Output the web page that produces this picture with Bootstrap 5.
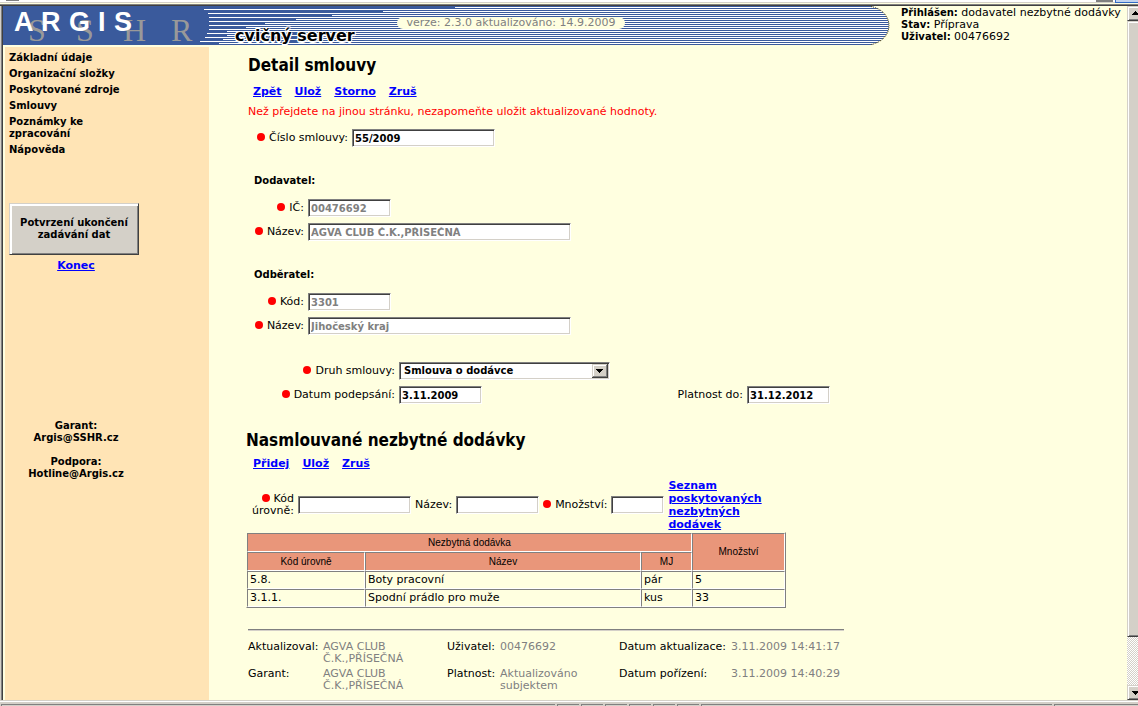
<!DOCTYPE html>
<html lang="cs">
<head>
<meta charset="utf-8">
<meta name="viewport" content="width=device-width, initial-scale=1">
<title>ARGIS – Detail smlouvy</title>
<link href="https://cdn.jsdelivr.net/npm/bootstrap@5.3.0/dist/css/bootstrap.min.css" rel="stylesheet">
<style>
  :root { --face: #d4d0c8; --page: #ffffe0; --side: #ffe4b5; }
  body { font: 11px/12px "DejaVu Sans", Verdana, sans-serif; color: #000; background: var(--page); }
  a { color: #00f; }
  b, .strong { font-weight: 700; font-size: 10px; }
  h1, h2 { font: 700 17px/20px "DejaVu Sans Condensed", Tahoma, sans-serif; margin: 0; }

  .chrome-top { height: 6px; background: #fff; border-bottom: 1px solid #404040; box-shadow: inset 0 -1px #808080, inset 0 -2px var(--page), inset 0 -3px var(--face); padding-left: 6px; gap: 2px; }
  .chrome-top i { width: 13px; height: 1px; background: #808080; }
  .chrome-top i + i { width: 17px; height: 2px; }
  .chrome-top .tool-hot { width: 23px; height: 3px; background: #c1d2ee; border: solid #316ac5; border-width: 0 0 1px 1px; }
  .chrome-side { width: 3px; background: var(--face); border-right: 1px solid #404040; box-shadow: inset -1px 0 #808080; }
  .status-strip { height: 6px; background: var(--face); border-top: 1px solid var(--face); box-shadow: inset 0 1px #fff; padding: 3px 0 0 1px; gap: 2px; }
  .status-strip i { width: 22px; border: solid #808080; border-width: 1px 0 0 1px; }
  .status-strip .zone { width: 351px; }
  .status-strip .zoom-level { width: 84px; }

  .scroller { width: 11px; background: repeating-conic-gradient(#fff 0 25%, var(--face) 0 50%) 0 0/2px 2px; }
  .scroller span { background: var(--face); border: solid; border-width: 1px 0 1px 1px; border-color: var(--face) #404040 #404040 var(--face); box-shadow: inset 1px 1px #fff, inset 0 -1px #808080; }
  .scroller .thumb { height: 616px; }
  .scroller svg { display: block; width: 10px; height: 13px; }

  .banner { width: 889px; }
  .banner svg { display: block; overflow: visible; }
  .version-pill { left: 394px; top: 11px; width: 228px; height: 12px; line-height: 12px; border-radius: 6px; background: var(--page); color: #808080; }
  .server-name { left: 232px; top: 22px; font-size: 16px; line-height: 16px; text-shadow: 1px 1px #fff, -1px -1px #fff, 1px -1px #fff, -1px 1px #fff, 0 2px #fff; }
  .user-info { padding: 1px 0 0 9px; }

  .page-body { padding: 2px 0 0 2px; }
  .sidebar { width: 204px; background: var(--side); font-size: 10px; font-weight: 700; padding: 5px 4px; }
  .sidebar li { width: 120px; }
  .sidebar li a { color: #000; text-decoration: none; }
  .sidebar .lower { width: 134px; margin-top: 47px; }
  .sidebar .contacts { margin-top: 148px; }
  .confirm-btn { width: 130px; height: 52px; font: inherit; color: #000; background: var(--face); border: 1px solid; border-color: var(--face) #404040 #404040 var(--face); box-shadow: inset 1px 1px #fff, inset 2px 2px #fff, inset -1px -1px #808080; }
  .big-link, .tools a { font-size: 11px; line-height: 13px; font-weight: 700; }

  .content { padding: 8px 0 0 37px; }
  .inset { padding-left: 2px; }
  .tools { gap: 13px; padding-left: 5px; margin-top: 10px; }
  .items .tools { padding-left: 7px; margin-top: 7px; }
  .warn { color: #f00; }
  .field-row { height: 24px; gap: 4px; }
  .field-row label, .filter label { text-align: right; }
  .group-title { margin: 25px 0 9px; padding-left: 6px; }
  .terms { margin-top: 21px; }
  .dot::before { content: ""; display: inline-block; width: 8px; height: 8px; border-radius: 50%; background: #f00; margin-right: 4px; }
  .lab-a { width: 100px; } .lab-b { width: 56px; } .lab-c { width: 147px; }
  .lab-d { width: 257px; }
  .sunken { height: 18px; padding: 1px 2px; font: 700 10px/14px "DejaVu Sans", Verdana, sans-serif; color: #000; background-color: #fff; border: 1px solid; border-color: #808080 #fff #fff #808080; border-radius: 0; box-shadow: inset 1px 1px #404040, inset -1px -1px var(--face); }
  .sunken:disabled { color: #808080; opacity: 1; }
  select.sunken { appearance: none; padding-left: 4px; background: #fff url("data:image/svg+xml,%3Csvg xmlns='http://www.w3.org/2000/svg' width='16' height='14' shape-rendering='crispEdges'%3E%3Cpath fill='%23404040' d='M0 0h16v14H0z'/%3E%3Cpath fill='%23d4d0c8' d='M0 0h15v13H0z'/%3E%3Cpath fill='%23808080' d='M1 1h14v12H1z'/%3E%3Cpath fill='%23fff' d='M1 1h13v11H1z'/%3E%3Cpath fill='%23d4d0c8' d='M2 2h12v10H2z'/%3E%3Cpath d='M4 5h7v1H4zM5 6h5v1H5zM6 7h3v1H6zM7 8h1v1H7z'/%3E%3C/svg%3E") right 1px top 1px no-repeat; }
  .w-s { width: 83px; } .w-m { width: 143px; } .w-l { width: 263px; } .w-sel { width: 211px; } .w-code { width: 113px; } .w-qty { width: 53px; }

  .items { margin-top: 23px; }
  .filter { gap: 4px; margin: 9px 0 1px; }
  .filter .two-line { width: 48px; }

  .grid-data { width: 540px; border: 1px solid; border-color: var(--page) #808080 #808080 var(--page); border-collapse: separate; border-spacing: 0; table-layout: fixed; }
  .grid-data th, .grid-data td { border: 1px solid; border-color: #808080 #fff #fff #808080; }
  .grid-data th { height: 19px; padding: 0; text-align: center; font: 400 10px/12px "Liberation Sans", Arial, sans-serif; background: #e9967a; }
  .grid-data td { height: 18px; padding: 0 2px; }
  .col-code { width: 118px; } .col-name { width: 276px; } .col-unit { width: 51px; }

  .rule { width: 596px; height: 2px; background: #808080; border-bottom: 1px solid var(--face); margin: 21px 0 10px; }
  .meta { width: 597px; display: grid; grid-template-columns: 75px 124px 53px 119px 112px 114px; row-gap: 3px; margin: 0; }
  .meta dt { font-weight: 400; } .meta dd { margin: 0; color: #808080; }
</style>
</head>
<body>
<div class="d-flex flex-column min-vh-100">
  <div class="chrome-top d-flex"><i class="me-auto"></i><i></i><i class="tool-hot"></i></div>
  <div class="d-flex flex-grow-1">
    <div class="chrome-side flex-shrink-0"></div>
    <div class="flex-grow-1 d-flex flex-column">
      <header class="d-flex">
        <div class="banner position-relative flex-shrink-0">
          <svg width="887" height="39" role="img" aria-label="ARGIS SSHR">
            <defs>
              <pattern id="stripes" width="4" height="2" patternUnits="userSpaceOnUse"><path fill="#fff" d="M0 0h4v2H0z"/><path fill="#3a5a9c" d="M0 0h4v1H0z"/></pattern>
            </defs>
            <path fill="url(#stripes)" d="M200 0H868C880 3 886 11 886 19.500S880 36 868 39H200Z"/>
            <path fill="none" stroke="#5c4c10" stroke-dasharray="1 1" d="M868 .5C880 3 886 11 886 19.500S880 36 868 38.500"/>
            <path fill="#3a5a9c" d="M0 0H452V2H380V6H329V10H293V14H262V18H243V22H224V27H300V39H0Z"/>
            <g fill="#fff" shape-rendering="crispEdges">
              <path d="M201 3h251v1H201zM205 7h175v1H205zM206 11h123v1H206zM206 15h87v1H206zM206 19h56v1H206zM206 23h40v1H206zM204 27h40v1H204zM202 31h40v1H202zM197 35h60v1H197z"/>
              <path d="M329 9h60v1h-60zM293 13h60v1h-60zM262 17h60v1h-60zM243 21h60v1h-60zM230 25h70v1h-70zM224 29h76v1h-76zM220 33h80v1h-80zM216 37h84v1h-84z"/>
            </g>
            <g font-family="Liberation Serif, Times New Roman, serif" font-size="32" fill="#999"><text x="25 73 120 168" y="35">SSHR</text></g>
            <g font-family="Liberation Sans, Arial, sans-serif" font-size="27" font-weight="700" fill="#fff"><text x="11 38 66 95 111" y="25">ARGIS</text></g>
          </svg>
          <div class="version-pill position-absolute text-center">verze: 2.3.0 aktualizováno: 14.9.2009</div>
          <div class="server-name position-absolute fw-bold text-nowrap">cvičný server</div>
        </div>
        <div class="user-info text-nowrap"><b>Přihlášen:</b> dodavatel nezbytné dodávky<br><b>Stav:</b> Příprava<br><b>Uživatel:</b> 00476692</div>
      </header>
      <div class="page-body d-flex flex-grow-1">
        <nav class="sidebar flex-shrink-0">
          <ul class="list-unstyled d-flex flex-column gap-1 mb-0">
            <li><a href="#">Základní údaje</a></li>
            <li><a href="#">Organizační složky</a></li>
            <li><a href="#">Poskytované zdroje</a></li>
            <li><a href="#">Smlouvy</a></li>
            <li><a href="#">Poznámky ke zpracování</a></li>
            <li><a href="#">Nápověda</a></li>
          </ul>
          <div class="lower text-center">
            <button type="button" class="confirm-btn d-block">Potvrzení ukončení<br>zadávání dat</button>
            <a class="big-link d-block mt-1" href="#">Konec</a>
            <div class="contacts">Garant:<br>Argis@SSHR.cz<br><br>Podpora:<br>Hotline@Argis.cz</div>
          </div>
        </nav>
        <main class="content flex-grow-1">
          <section class="inset">
            <h1>Detail smlouvy</h1>
            <div class="tools d-flex"><a href="#">Zpět</a><a href="#">Ulož</a><a href="#">Storno</a><a href="#">Zruš</a></div>
            <p class="warn my-2">Než přejdete na jinou stránku, nezapomeňte uložit aktualizované hodnoty.</p>
            <div class="field-row d-flex align-items-center"><label class="dot lab-a" for="cislo">Číslo smlouvy:</label><input id="cislo" class="sunken w-m" value="55/2009"></div>
            <div class="strong group-title">Dodavatel:</div>
            <div class="field-row d-flex align-items-center"><label class="dot lab-b" for="ic">IČ:</label><input id="ic" class="sunken w-s" value="00476692" disabled></div>
            <div class="field-row d-flex align-items-center"><label class="dot lab-b" for="dnazev">Název:</label><input id="dnazev" class="sunken w-l" value="AGVA CLUB Č.K.,PŘÍSEČNÁ" disabled></div>
            <div class="strong group-title">Odběratel:</div>
            <div class="field-row d-flex align-items-center"><label class="dot lab-b" for="kod">Kód:</label><input id="kod" class="sunken w-s" value="3301" disabled></div>
            <div class="field-row d-flex align-items-center"><label class="dot lab-b" for="onazev">Název:</label><input id="onazev" class="sunken w-l" value="Jihočeský kraj" disabled></div>
            <div class="terms">
              <div class="field-row d-flex align-items-center"><label class="dot lab-c" for="druh">Druh smlouvy:</label><select id="druh" class="sunken w-sel"><option>Smlouva o dodávce</option></select></div>
              <div class="field-row d-flex align-items-center"><label class="dot lab-c" for="podpis">Datum podepsání:</label><input id="podpis" class="sunken w-s" value="3.11.2009"><label class="lab-d" for="platnost">Platnost do:</label><input id="platnost" class="sunken w-s" value="31.12.2012"></div>
            </div>
          </section>
          <section class="items">
            <h2>Nasmlouvané nezbytné dodávky</h2>
            <div class="tools d-flex"><a href="#">Přidej</a><a href="#">Ulož</a><a href="#">Zruš</a></div>
            <div class="filter d-flex align-items-center">
              <label class="dot two-line" for="fkod">Kód úrovně:</label><input id="fkod" class="sunken w-code">
              <label for="fnazev">Název:</label><input id="fnazev" class="sunken w-s">
              <label class="dot" for="fmnoz">Množství:</label><input id="fmnoz" class="sunken w-qty">
              <a class="big-link" href="#">Seznam<br>poskytovaných<br>nezbytných<br>dodávek</a>
            </div>
            <table class="grid-data">
              <colgroup><col class="col-code"><col class="col-name"><col class="col-unit"><col></colgroup>
              <thead>
                <tr><th colspan="3">Nezbytná dodávka</th><th rowspan="2">Množství</th></tr>
                <tr><th>Kód úrovně</th><th>Název</th><th>MJ</th></tr>
              </thead>
              <tbody>
                <tr><td>5.8.</td><td>Boty pracovní</td><td>pár</td><td>5</td></tr>
                <tr><td>3.1.1.</td><td>Spodní prádlo pro muže</td><td>kus</td><td>33</td></tr>
              </tbody>
            </table>
          </section>
          <footer class="inset">
            <div class="rule"></div>
            <dl class="meta">
              <dt>Aktualizoval:</dt><dd>AGVA CLUB<br>Č.K.,PŘÍSEČNÁ</dd><dt>Uživatel:</dt><dd>00476692</dd><dt>Datum aktualizace:</dt><dd>3.11.2009 14:41:17</dd>
              <dt>Garant:</dt><dd>AGVA CLUB<br>Č.K.,PŘÍSEČNÁ</dd><dt>Platnost:</dt><dd>Aktualizováno<br>subjektem</dd><dt>Datum pořízení:</dt><dd>3.11.2009 14:40:29</dd>
            </dl>
          </footer>
        </main>
      </div>
    </div>
    <div class="scroller flex-shrink-0 d-flex flex-column" aria-hidden="true">
      <span><svg shape-rendering="crispEdges"><path d="M7 4h1v1H7zM6 5h3v1H6zM5 6h5v1H5zM4 7h6v1H4z"/></svg></span>
      <span class="thumb"></span>
      <span class="mt-auto"><svg shape-rendering="crispEdges"><path d="M4 5h6v1H4zM5 6h5v1H5zM6 7h3v1H6zM7 8h1v1H7z"/></svg></span>
    </div>
  </div>
  <div class="status-strip d-flex"><i class="flex-grow-1"></i><i></i><i></i><i></i><i></i><i></i><i></i><i class="zone"></i><i class="zoom-level"></i></div>
</div>
<script src="https://cdn.jsdelivr.net/npm/bootstrap@5.3.0/dist/js/bootstrap.bundle.min.js"></script>
</body>
</html>
